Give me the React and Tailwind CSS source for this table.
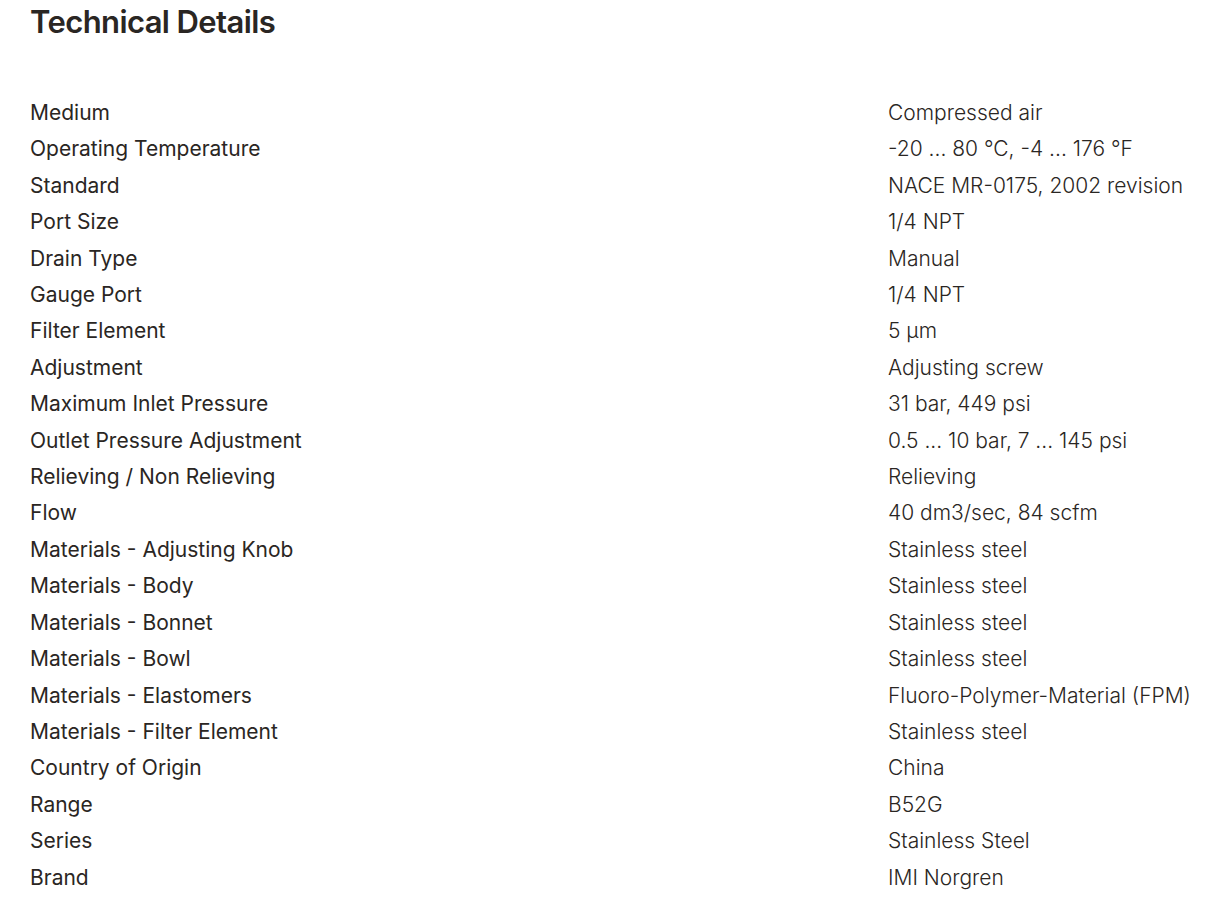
import React from 'react';

const specs = [
  ['Medium', 'Compressed air'],
  ['Operating Temperature', '-20 ... 80 °C, -4 ... 176 °F'],
  ['Standard', 'NACE MR-0175, 2002 revision'],
  ['Port Size', '1/4 NPT'],
  ['Drain Type', 'Manual'],
  ['Gauge Port', '1/4 NPT'],
  ['Filter Element', '5 µm'],
  ['Adjustment', 'Adjusting screw'],
  ['Maximum Inlet Pressure', '31 bar, 449 psi'],
  ['Outlet Pressure Adjustment', '0.5 ... 10 bar, 7 ... 145 psi'],
  ['Relieving / Non Relieving', 'Relieving'],
  ['Flow', '40 dm3/sec, 84 scfm'],
  ['Materials - Adjusting Knob', 'Stainless steel'],
  ['Materials - Body', 'Stainless steel'],
  ['Materials - Bonnet', 'Stainless steel'],
  ['Materials - Bowl', 'Stainless steel'],
  ['Materials - Elastomers', 'Fluoro-Polymer-Material (FPM)'],
  ['Materials - Filter Element', 'Stainless steel'],
  ['Country of Origin', 'China'],
  ['Range', 'B52G'],
  ['Series', 'Stainless Steel'],
  ['Brand', 'IMI Norgren'],
];

export default function App() {
  return (
    <div className="min-h-screen w-full bg-white pl-[30px] pr-[8px] text-[#2a2623] font-['Inter',sans-serif]">
      <h2 className="pt-[2px] text-[31px] leading-[40px] font-semibold tracking-[-0.6px]">Technical Details</h2>

      {/* spec table */}
      <dl className="mt-[53px] grid grid-cols-[858px_1fr] text-[21px] leading-[36.4px]">
        {specs.map(([label, value]) => (
          <React.Fragment key={label}>
            <dt className="font-normal whitespace-nowrap">{label}</dt>
            <dd className="font-light whitespace-nowrap">{value}</dd>
          </React.Fragment>
        ))}
      </dl>
    </div>
  );
}
